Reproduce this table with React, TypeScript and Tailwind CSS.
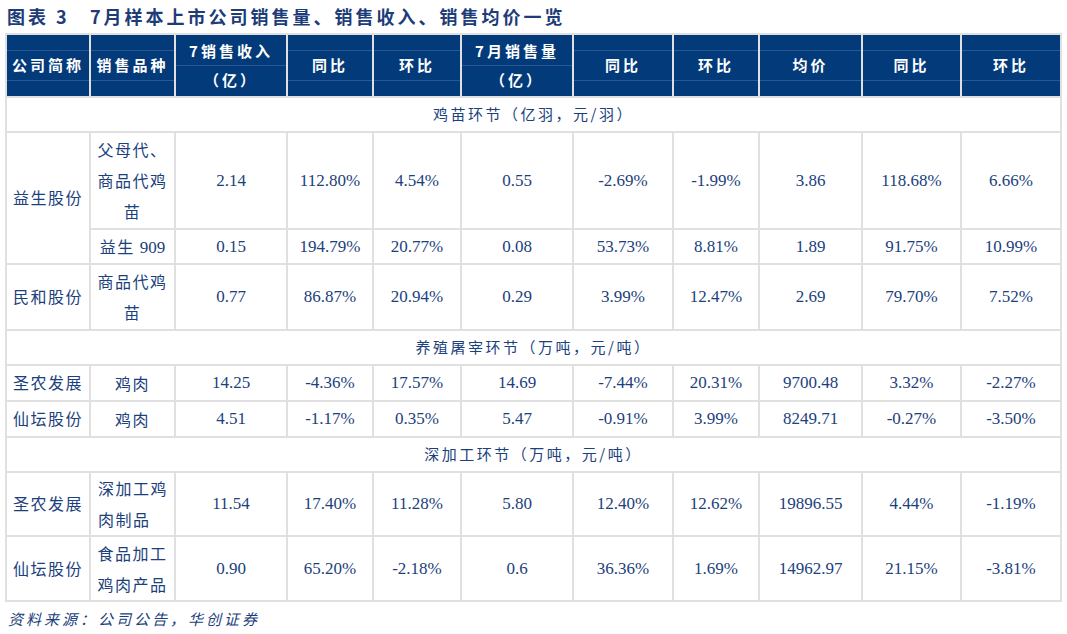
const font = "font-['Liberation_Serif','Noto_Sans_CJK_SC',serif]";
const cjk = "font-['Noto_Sans_CJK_SC',sans-serif]";
const line = "border-2 border-[#e0e0e0]";

type Row = {
  name?: string;
  nameSpan?: number;
  kind: React.ReactNode;
  kindAlign?: "center" | "left";
  values: string[];
  h: number;
};

const widths = [84, 85, 112, 86, 88, 112, 100, 86, 103, 99, 100];

function HeadSingle({ label }: { label: string }) {
  return (
    <th className={`${line} border-[#dcdcdc] bg-[#033a7a] p-0 align-top`}>
      <div className="flex h-[61px] flex-col">
        <div className="h-[15px]" />
        <div className="flex flex-1 items-center justify-center border-y border-[#2b5891]">
          {label}
        </div>
        <div className="h-[15px]" />
      </div>
    </th>
  );
}

function HeadDouble({ top, bottom }: { top: string; bottom: string }) {
  return (
    <th className={`${line} border-[#dcdcdc] bg-[#033a7a] p-0 align-top`}>
      <div className="flex h-[61px] flex-col">
        <div className="flex flex-1 items-center justify-center border-b border-[#2b5891] pt-[2px]">
          {top}
        </div>
        <div className="flex flex-1 items-center justify-center pb-[2px]">{bottom}</div>
      </div>
    </th>
  );
}

function Section({ label }: { label: string }) {
  return (
    <tr>
      <td colSpan={11} className={`${line} p-0`}>
        <div
          className={`flex h-[33px] items-center justify-center ${cjk} text-[15px] tracking-[2.5px]`}
        >
          {label}
        </div>
      </td>
    </tr>
  );
}

function DataRow({ row }: { row: Row }) {
  return (
    <tr>
      {row.name && (
        <td rowSpan={row.nameSpan ?? 1} className={`${line} p-0 text-center align-middle`}>
          <span className={`${cjk} text-[16px] tracking-[1.5px]`}>{row.name}</span>
        </td>
      )}
      <td className={`${line} p-0`}>
        <div
          style={{ height: row.h }}
          className={`flex items-center ${
            row.kindAlign === "left" ? "justify-start pl-[7px]" : "justify-center"
          } ${cjk} text-[16px] leading-[31px] tracking-[1.5px]`}
        >
          <div className={row.kindAlign === "left" ? "text-left" : "text-center"}>{row.kind}</div>
        </div>
      </td>
      {row.values.map((v, i) => (
        <td key={i} className={`${line} p-0`}>
          <div style={{ height: row.h }} className="flex items-center justify-center text-[17px]">
            {v}
          </div>
        </td>
      ))}
    </tr>
  );
}

const chick: Row[] = [
  {
    name: "益生股份",
    nameSpan: 2,
    kind: (
      <>
        父母代、
        <br />
        商品代鸡
        <br />苗
      </>
    ),
    values: ["2.14", "112.80%", "4.54%", "0.55", "-2.69%", "-1.99%", "3.86", "118.68%", "6.66%"],
    h: 95,
  },
  {
    kind: (
      <>
        益生 <span className={`${font} text-[17px] tracking-normal`}>909</span>
      </>
    ),
    values: ["0.15", "194.79%", "20.77%", "0.08", "53.73%", "8.81%", "1.89", "91.75%", "10.99%"],
    h: 33,
  },
  {
    name: "民和股份",
    kind: (
      <>
        商品代鸡
        <br />苗
      </>
    ),
    values: ["0.77", "86.87%", "20.94%", "0.29", "3.99%", "12.47%", "2.69", "79.70%", "7.52%"],
    h: 64,
  },
];

const farm: Row[] = [
  {
    name: "圣农发展",
    kind: "鸡肉",
    values: ["14.25", "-4.36%", "17.57%", "14.69", "-7.44%", "20.31%", "9700.48", "3.32%", "-2.27%"],
    h: 34,
  },
  {
    name: "仙坛股份",
    kind: "鸡肉",
    values: ["4.51", "-1.17%", "0.35%", "5.47", "-0.91%", "3.99%", "8249.71", "-0.27%", "-3.50%"],
    h: 34,
  },
];

const deep: Row[] = [
  {
    name: "圣农发展",
    kind: (
      <>
        深加工鸡
        <br />
        肉制品
      </>
    ),
    kindAlign: "left",
    values: ["11.54", "17.40%", "11.28%", "5.80", "12.40%", "12.62%", "19896.55", "4.44%", "-1.19%"],
    h: 62,
  },
  {
    name: "仙坛股份",
    kind: (
      <>
        食品加工
        <br />
        鸡肉产品
      </>
    ),
    values: ["0.90", "65.20%", "-2.18%", "0.6", "36.36%", "1.69%", "14962.97", "21.15%", "-3.81%"],
    h: 63,
  },
];

export default function App() {
  return (
    <div className={`h-[634px] w-[1067px] bg-white ${font} text-[#1c3f7d]`}>
      <div
        className={`flex h-[33px] items-center pl-[7px] ${cjk} text-[18px] font-bold tracking-[3px] text-[#1d3c78]`}
      >
        <span className="w-[83px] shrink-0">图表 3</span>
        <span>7月样本上市公司销售量、销售收入、销售均价一览</span>
      </div>
      <div className="pl-[5px]">
        <table className="w-[1057px] table-fixed border-collapse">
          <colgroup>
            {widths.map((w, i) => (
              <col key={i} style={{ width: w }} />
            ))}
          </colgroup>
          <thead className={`${cjk} text-[15px] font-bold tracking-[3px] text-white`}>
            <tr>
              <HeadSingle label="公司简称" />
              <HeadSingle label="销售品种" />
              <HeadDouble top="7销售收入" bottom="（亿）" />
              <HeadSingle label="同比" />
              <HeadSingle label="环比" />
              <HeadDouble top="7月销售量" bottom="（亿）" />
              <HeadSingle label="同比" />
              <HeadSingle label="环比" />
              <HeadSingle label="均价" />
              <HeadSingle label="同比" />
              <HeadSingle label="环比" />
            </tr>
          </thead>
          <tbody>
            <Section label="鸡苗环节（亿羽，元/羽）" />
            {chick.map((r, i) => (
              <DataRow key={i} row={r} />
            ))}
            <Section label="养殖屠宰环节（万吨，元/吨）" />
            {farm.map((r, i) => (
              <DataRow key={i} row={r} />
            ))}
            <Section label="深加工环节（万吨，元/吨）" />
            {deep.map((r, i) => (
              <DataRow key={i} row={r} />
            ))}
          </tbody>
        </table>
      </div>
      <div className={`pl-[8px] pt-[6px] ${cjk} text-[15px] italic tracking-[3px]`}>
        资料来源：公司公告，华创证券
      </div>
    </div>
  );
}
